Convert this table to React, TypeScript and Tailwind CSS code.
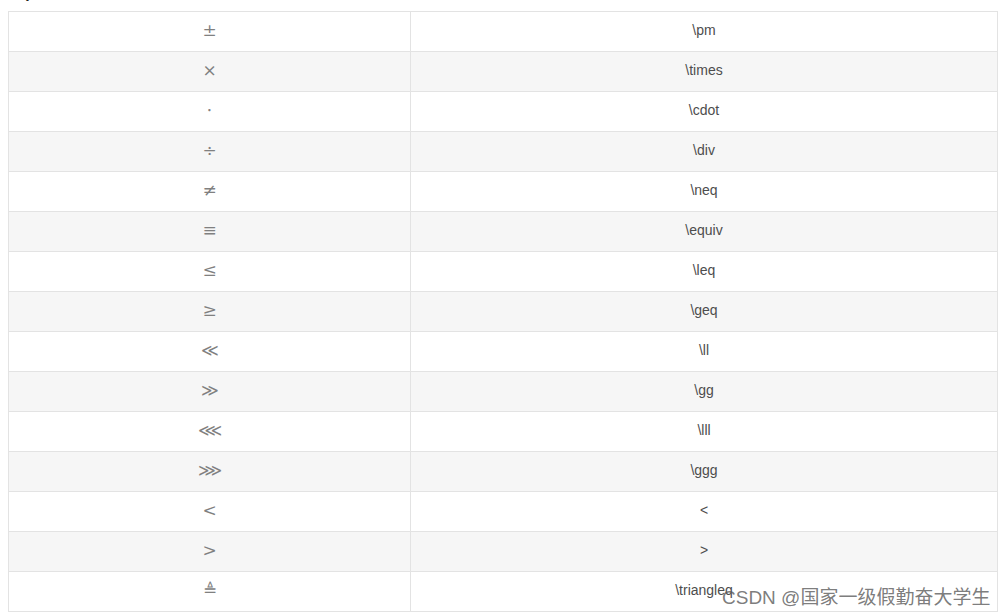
import React from "react";

const rows: [string, string][] = [
  ["±", "\\pm"],
  ["×", "\\times"],
  ["⋅", "\\cdot"],
  ["÷", "\\div"],
  ["≠", "\\neq"],
  ["≡", "\\equiv"],
  ["≤", "\\leq"],
  ["≥", "\\geq"],
  ["≪", "\\ll"],
  ["≫", "\\gg"],
  ["⋘", "\\lll"],
  ["⋙", "\\ggg"],
  ["<", "<"],
  [">", ">"],
  ["≜", "\\triangleq"],
];

export default function App() {
  return (
    <div className="relative w-[1007px] h-[616px] overflow-hidden bg-white" style={{ fontFamily: "'Liberation Sans', Arial, sans-serif" }}>
      <div className="h-[11px] overflow-hidden pl-[17px]">
        <div className="-mt-[17px] text-[16px] leading-[20px] font-bold text-[#222]">2)</div>
      </div>
      <table className="ml-[8px] w-[989px] border-collapse table-fixed">
        <colgroup>
          <col className="w-[402px]" />
          <col className="w-[587px]" />
        </colgroup>
        <tbody>
          {rows.map(([sym, code], i) => (
            <tr key={i} className={i % 2 === 1 ? "bg-[#f6f6f6]" : "bg-white"}>
              <td className="h-[40px] border border-[#e3e3e3] text-center align-middle p-0 text-[17px] text-[#808080]" style={{ fontFamily: "'DejaVu Serif', 'Liberation Serif', serif" }}>
                <span className="relative -top-[1px]">{sym}</span>
              </td>
              <td className="h-[40px] border border-[#e3e3e3] text-center align-middle p-0 text-[14px] text-[#4d4d4d]">
                <span className="relative -top-[1px]">{code}</span>
              </td>
            </tr>
          ))}
        </tbody>
      </table>
      <div
        className="absolute left-[722px] top-[584px] text-[19px] text-[#5a5a5a]/80 whitespace-nowrap"
        style={{ fontFamily: "'Liberation Sans', 'Noto Sans CJK SC', sans-serif" }}
      >
        CSDN @国家一级假勤奋大学生
      </div>
    </div>
  );
}
